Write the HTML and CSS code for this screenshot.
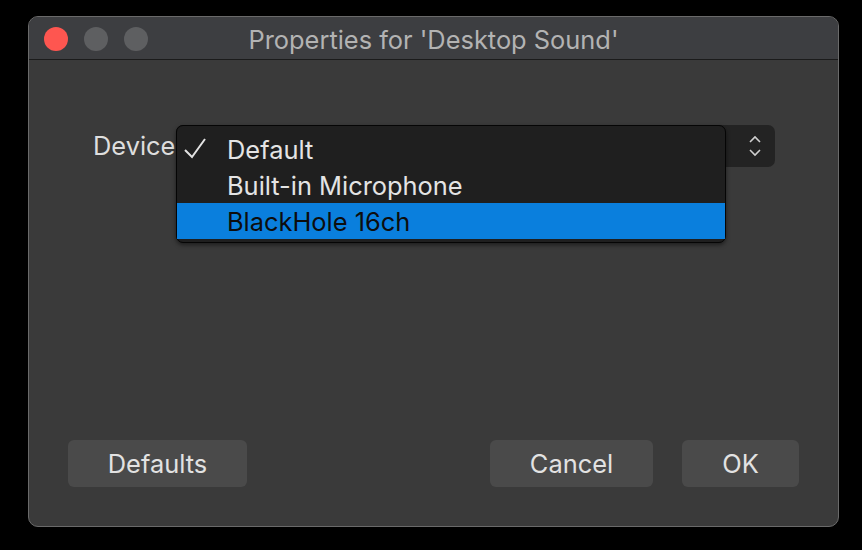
FILE: index.html
```html
<!DOCTYPE html>
<html lang="en">
<head>
  <meta charset="UTF-8" />
  <title>Properties for 'Desktop Sound'</title>
  <link rel="stylesheet" href="styles.css">
</head>
<body>

  <div class="window">
    <div class="titlebar">
      <div class="lights">
        <span class="light close"></span>
        <span class="light"></span>
        <span class="light"></span>
      </div>
      <div class="title">Properties for 'Desktop Sound'</div>
    </div>

    <div class="content">
      <div class="form-row">
        <label class="label">Device</label>
        <div class="combo">
          <svg class="arrows" width="14" height="24" viewBox="0 0 14 24">
            <polyline points="2,8 7,3 12,8" fill="none" stroke="#cfcfcf" stroke-width="1.6" />
            <polyline points="2,16 7,21 12,16" fill="none" stroke="#cfcfcf" stroke-width="1.6" />
          </svg>

          <!-- open dropdown list -->
          <div class="popup">
            <div class="item">
              <svg class="check" width="24" height="22" viewBox="0 0 24 22">
                <polyline points="2,12 9,19 22,1" fill="none" stroke="#e2e2e2" stroke-width="2" />
              </svg>
              <span>Default</span>
            </div>
            <div class="item"><span>Built-in Microphone</span></div>
            <div class="item selected"><span>BlackHole 16ch</span></div>
          </div>
        </div>
      </div>

      <div class="footer">
        <button class="btn defaults-btn">Defaults</button>
        <div class="spacer"></div>
        <button class="btn cancel-btn">Cancel</button>
        <button class="btn ok-btn">OK</button>
      </div>
    </div>
  </div>

</body>
</html>
```

FILE: styles.css
```css
body {
  margin: 0;
  background-color: #000;
  font-family: Inter, "Liberation Sans", Arial, sans-serif;
  color: #dedede;
  height: 550px;
  overflow: hidden;
}

.window {
  margin: 16px 0 0 28px;
  width: 809px;
  height: 509px;
  border: 1px solid #6a6a6a;
  border-radius: 10px;
  background-color: #3a3a3a;
  display: flex;
  flex-direction: column;
  overflow: hidden;
}

.titlebar {
  height: 42px;
  background-color: #3d3e41;
  border-bottom: 1px solid #1b1b1b;
  display: flex;
  align-items: center;
  position: relative;
}

.lights {
  display: flex;
  gap: 16px;
  padding-left: 15px;
  margin-top: 2px;
}

.light {
  width: 24px;
  height: 24px;
  border-radius: 50%;
  background-color: #5e5f61;
}

.light.close {
  background-color: #fe5650;
}

.title {
  position: absolute;
  left: 0;
  right: 0;
  text-align: center;
  font-size: 25.4px;
  color: #b3b3b3;
  margin-top: 2px;
}

.content {
  flex-grow: 1;
  display: flex;
  flex-direction: column;
  padding: 65px 39px 39px 39px;
}

.form-row {
  display: flex;
  align-items: center;
  padding-left: 25px;
}

.label {
  font-size: 25.4px;
  width: 83px;
  margin-top: -1px;
}

.combo {
  position: relative;
  width: 599px;
  height: 42px;
  background-color: #232323;
  border-radius: 7px;
  display: flex;
  align-items: center;
  justify-content: flex-end;
  padding-right: 13px;
  box-sizing: border-box;
}

.popup {
  position: absolute;
  left: 0;
  top: 0;
  width: 550px;
  box-sizing: border-box;
  padding: 5px 0 3px 0;
  background-color: #1f1f1f;
  border: 1px solid #050505;
  border-radius: 7px;
  box-shadow: 0 2px 4px rgba(0,0,0,0.5);
}

.item {
  height: 36px;
  display: flex;
  align-items: center;
  padding-left: 50px;
  font-size: 25.4px;
  color: #e4e4e4;
  position: relative;
}

.item.selected {
  background-color: #0a7fdd;
  color: #0d0d0d;
}

.check {
  position: absolute;
  left: 6px;
  top: 7px;
}

.footer {
  margin-top: auto;
  display: flex;
  align-items: center;
}

.spacer {
  flex-grow: 1;
}

.btn {
  height: 47px;
  border: none;
  border-radius: 6px;
  background-color: #4a4a4a;
  color: #e2e2e2;
  font-family: inherit;
  font-size: 25.4px;
  padding: 0;
}

.defaults-btn {
  width: 179px;
}

.cancel-btn {
  width: 163px;
  margin-right: 29px;
}

.ok-btn {
  width: 117px;
}
```
